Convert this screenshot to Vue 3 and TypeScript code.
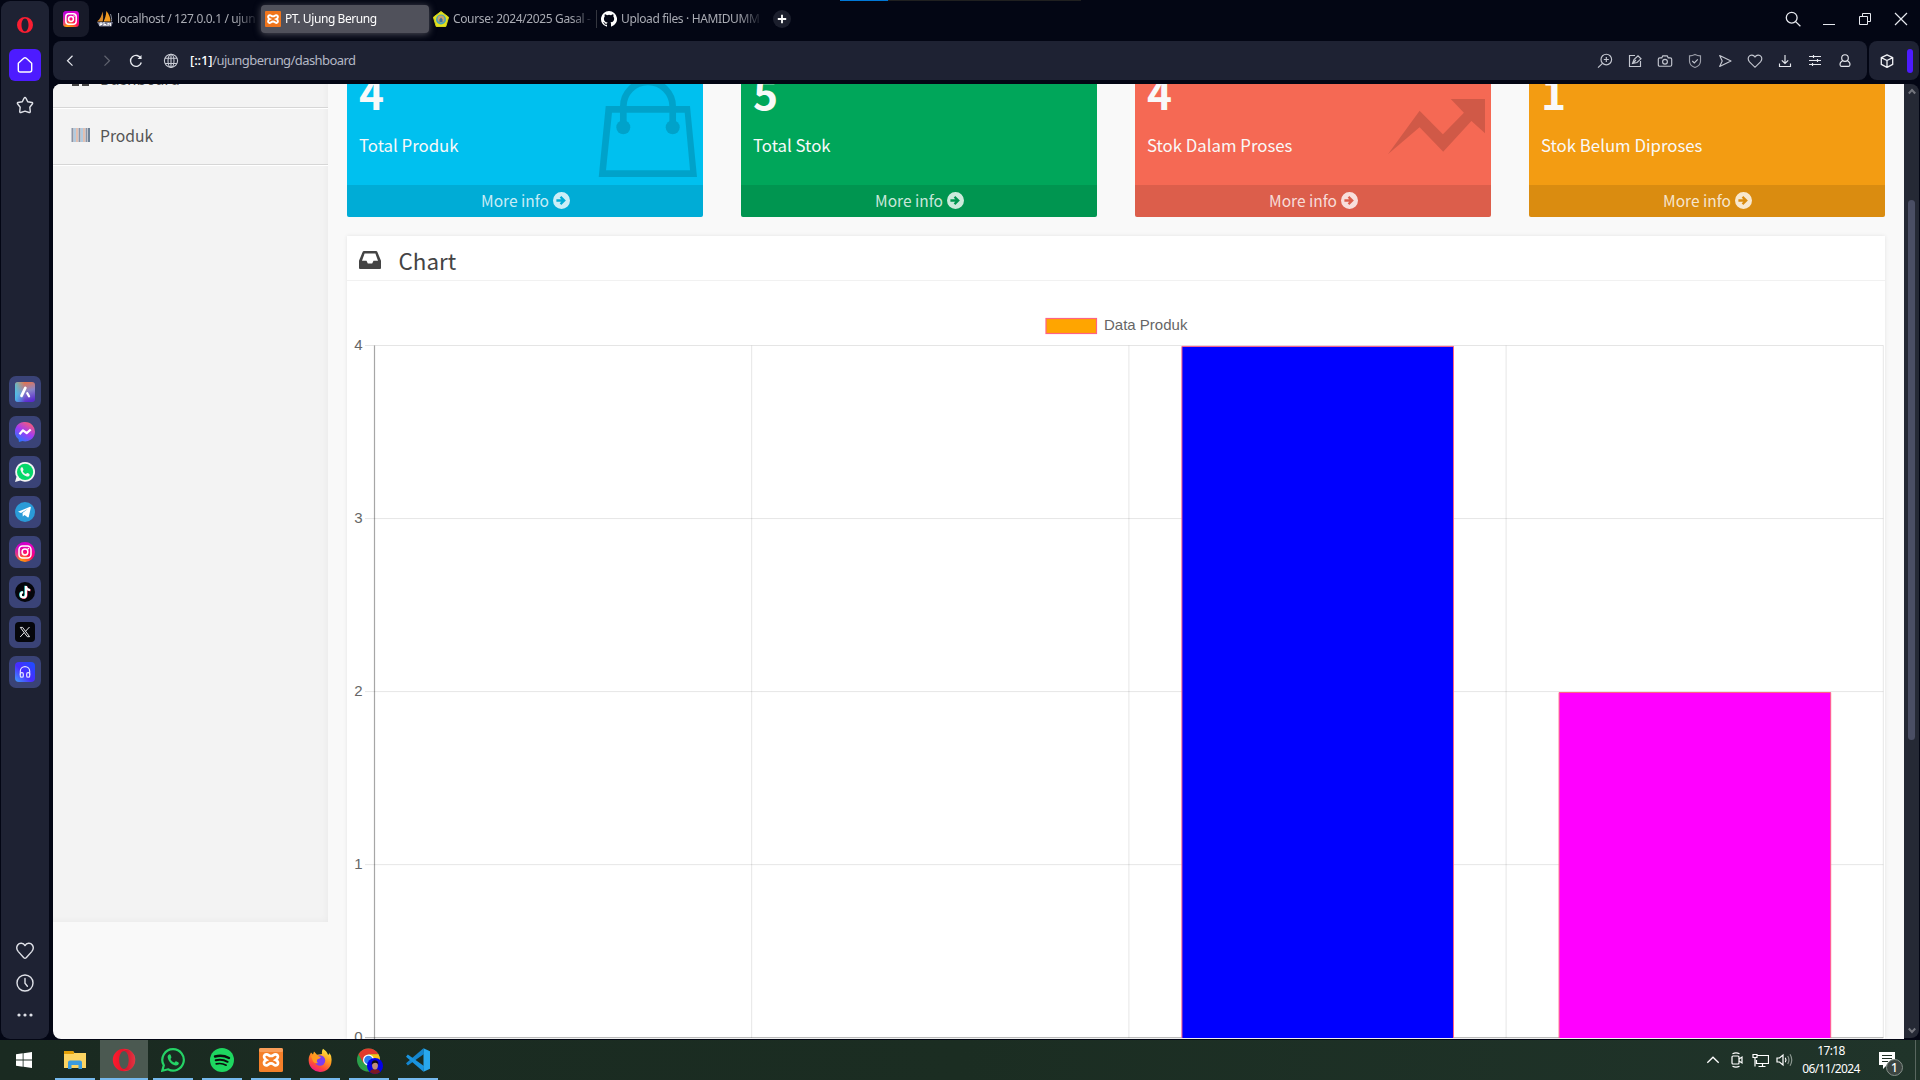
<script setup lang="ts">
interface Tab {
  title: string
  icon: string
  active?: boolean
  divider?: boolean
}
interface Card {
  value: string
  label: string
  tone: string
  icon?: string
}

const tabs: Tab[] = [
  { title: 'localhost / 127.0.0.1 / ujun', icon: 'pma' },
  { title: 'PT. Ujung Berung', icon: 'xampp', active: true },
  { title: 'Course: 2024/2025 Gasal -', icon: 'course', divider: true },
  { title: 'Upload files · HAMIDUMM', icon: 'github' },
]

const cards: Card[] = [
  { value: '4', label: 'Total Produk', tone: 'aqua', icon: 'bag' },
  { value: '5', label: 'Total Stok', tone: 'green' },
  { value: '4', label: 'Stok Dalam Proses', tone: 'red', icon: 'trend' },
  { value: '1', label: 'Stok Belum Diproses', tone: 'yellow' },
]

const tools: string[] = ['zoom', 'edit', 'camera', 'shield', 'send', 'heart', 'download', 'sliders', 'user']
const apps: string[] = ['aria', 'messenger', 'whatsapp', 'telegram', 'instagram', 'tiktok', 'x', 'player']
const pinned: string[] = ['explorer', 'opera', 'whatsapp', 'spotify', 'xampp', 'firefox', 'chrome', 'vscode']

// Plot geometry, relative to the top left corner of the chart body
const left = 27.5
const top = 64.5
const stepX = 377.2
const stepY = 173.05
const values = [0, 0, 4, 2]
const fills = ['red', 'green', '#0000ff', '#ff00ff']
const barWidth = stepX * 0.72
const bars = values
  .map((v, i) => ({
    x: left + stepX * (i + 0.5) - barWidth / 2 + 0.2,
    y: top + stepY * (4 - v) + 0.9,
    h: stepY * v - 0.6,
    fill: fills[i],
  }))
  .filter((b) => b.h > 0)
const rows = [4, 3, 2, 1, 0].map((n) => ({ n, y: top + stepY * (4 - n) }))
const cols = [1, 2, 3, 4].map((n) => left + stepX * n)
</script>

<template>
  <div class="desktop">
    <svg width="0" height="0" class="defs">
      <defs>
        <linearGradient id="ig" x1="0" y1="1" x2="1" y2="0">
          <stop offset="0" stop-color="#ffc600" /><stop offset=".3" stop-color="#ff7a1a" />
          <stop offset=".55" stop-color="#ff0069" /><stop offset="1" stop-color="#c800ff" />
        </linearGradient>
        <linearGradient id="ig2" x1="0" y1="0" x2="1" y2="1">
          <stop offset="0" stop-color="#9a00ff" stop-opacity="1" /><stop offset=".45" stop-color="#e000c8" stop-opacity=".5" />
          <stop offset=".6" stop-color="#ff0069" stop-opacity="0" />
        </linearGradient>
        <linearGradient id="ms" x1=".2" y1="1" x2=".8" y2="0">
          <stop offset="0" stop-color="#1e7bff" /><stop offset=".5" stop-color="#a13bf5" /><stop offset="1" stop-color="#ff5f6d" />
        </linearGradient>
        <linearGradient id="ar" x1=".3" y1="0" x2=".6" y2="1">
          <stop offset="0" stop-color="#f4703a" /><stop offset=".5" stop-color="#8a86c8" /><stop offset="1" stop-color="#5a2bd0" />
        </linearGradient>
        <linearGradient id="ar2" x1="0" y1="0" x2="1" y2="0">
          <stop offset="0" stop-color="#3fd0f0" stop-opacity=".8" /><stop offset=".5" stop-color="#3fd0f0" stop-opacity="0" />
        </linearGradient>
        <linearGradient id="pl" x1="0" y1="1" x2="1" y2="0">
          <stop offset="0" stop-color="#3fa0ff" /><stop offset=".45" stop-color="#4a2bff" /><stop offset="1" stop-color="#1a50ff" />
        </linearGradient>
        <linearGradient id="op" x1="0" y1="0" x2="1" y2="0">
          <stop offset="0" stop-color="#ff1b2d" /><stop offset=".45" stop-color="#e8142a" /><stop offset="1" stop-color="#ff5a5f" />
        </linearGradient>
        <linearGradient id="ff" x1=".8" y1="0" x2=".3" y2="1">
          <stop offset="0" stop-color="#fff04a" /><stop offset=".4" stop-color="#ffa01e" /><stop offset=".75" stop-color="#ff4a3a" /><stop offset="1" stop-color="#f0148c" />
        </linearGradient>
      </defs>
    </svg>

    <div class="browser">
      <aside class="rail">
        <svg class="rail-opera" width="16" height="16" viewBox="0 0 16 16"><path fill="#fa1e32" fill-rule="evenodd" d="M8 0a8 8 0 1 0 0 16A8 8 0 0 0 8 0Zm0 1.600c2 0 3.500 2.900 3.500 6.400S10 14.400 8 14.400 4.500 11.500 4.500 8 6 1.600 8 1.600Z" /></svg>
        <span class="home"><svg width="18" height="18" viewBox="0 0 18 18" fill="none" stroke="#fff" stroke-width="1.400" stroke-linejoin="round"><path d="M2.300 7.300 7.700 2.200q1.300-1 2.600 0l5.400 5.100V14q0 2-2 2H4.300q-2 0-2-2Z" /></svg></span>
        <svg class="star" width="18" height="18" viewBox="0 0 18 18" fill="none" stroke="#dfe1e8" stroke-width="1.400" stroke-linejoin="round"><path d="M9 1.400q.6 0 .9.700l1.800 3.600 4.300.8q1 .3.500 1.200l-2.700 3.500.5 4.400q0 1.200-1.200.9L9 15.200l-4.100 1.300q-1.200.3-1.200-.9l.5-4.400L1.500 7.700q-.5-.9.500-1.200l4.300-.8 1.800-3.600q.3-.7.9-.7Z" /></svg>
        <div class="apps">
          <span v-for="a in apps" :key="a" class="app">
            <svg width="20" height="20" viewBox="0 0 20 20">
              <template v-if="a === 'aria'">
                <rect width="20" height="20" rx="3" fill="url(#ar)" /><rect width="20" height="20" rx="3" fill="url(#ar2)" />
                <path d="M10.300 6 6.500 13.800" stroke="#fff" stroke-width="2.800" stroke-linecap="round" /><path d="m12.300 11.300 1.700 3" stroke="#fff" stroke-width="2.300" stroke-linecap="round" />
              </template>
              <template v-else-if="a === 'messenger'">
                <path d="M10 0a10 9.700 0 1 1-2.500 19.100L4 20l-.5-2.800A9.700 9.700 0 0 1 10 0Z" fill="url(#ms)" />
                <path d="m4.500 12.300 3.500-4 3.700 2.800 4-3.600" fill="none" stroke="#fff" stroke-width="2.200" stroke-linejoin="round" />
              </template>
              <template v-else-if="a === 'whatsapp'">
                <path d="M10.100 0a9.900 9.900 0 1 1-4.700 18.600L0 20l1.500-5.200A9.900 9.900 0 0 1 10.100 0Z" fill="#f4f4f4" />
                <circle cx="10.100" cy="9.900" r="8.100" fill="#05d86a" />
                <path d="M6.800 5.300c-.9.200-1.600 1.300-1.300 2.700.8 3.300 3.200 5.700 6.300 6.500 1.300.3 2.600-.4 2.800-1.500.1-.7 0-.9-2.200-1.900-.7-.3-.9.900-1.500 1-1 0-3-1.900-3.100-2.800 0-.5.9-.9.7-1.500-.6-2-.8-2.500-1.700-2.500Z" fill="#f4f4f4" />
              </template>
              <template v-else-if="a === 'telegram'">
                <circle cx="10" cy="10" r="10" fill="#2a9bd8" /><path d="m3 9.800 12-5q1-.3.800 1l-2 9q-.3 1-1.200.5L9.500 13l-1.700 1.600L7.500 11l5.500-4.200L6 11Z" fill="#fff" />
              </template>
              <template v-else-if="a === 'instagram'">
                <circle cx="10" cy="10" r="10" fill="url(#ig)" /><circle cx="10" cy="10" r="10" fill="url(#ig2)" />
                <g fill="none" stroke="#fff" stroke-width="1.500"><rect x="4" y="4" width="12" height="12" rx="3.500" /><circle cx="10" cy="10" r="2.900" /></g><circle cx="13.400" cy="6.600" r=".9" fill="#fff" />
              </template>
              <template v-else-if="a === 'tiktok'">
                <circle cx="10" cy="10" r="10" fill="#05060b" />
                <g fill="none" stroke-width="2.100"><path d="M10.400 3.700v8.800a2.600 2.600 0 1 1-2.700-2.500M10.400 4c.2 2 1.800 3.400 4 3.500" stroke="#3de8e4" /><path d="M11.600 4.500v8.800A2.600 2.600 0 0 1 7 15M11.500 5c.5 2 2 3.300 4 3.500" stroke="#f5295a" /><path d="M11 4v8.900a2.600 2.600 0 1 1-2.800-2.600M11 4.300c.2 2 1.700 3.500 4.200 3.700" stroke="#fff" /></g>
              </template>
              <template v-else-if="a === 'x'">
                <rect width="20" height="20" rx="4" fill="#05060b" /><g fill="none" stroke="#e8e8ea" stroke-width="1"><path d="M5.300 5.400h2.300l7 9.300h-2.300Z" /><path d="m14.500 5-4 4.300M5.200 15l4-4.400" /></g>
              </template>
              <template v-else>
                <rect width="20" height="20" rx="4" fill="url(#pl)" /><g fill="none" stroke="#e3e5ff" stroke-width="1.200"><path d="M5.300 12.800V9.300a4.700 4.700 0 0 1 9.400 0v3.500" /><rect x="5.300" y="10.600" width="3" height="4.600" rx="1.300" /><rect x="11.700" y="10.600" width="3" height="4.600" rx="1.300" /></g>
              </template>
            </svg>
          </span>
        </div>
        <div class="rail-end">
          <svg width="18" height="18" viewBox="0 0 18 18" fill="none" stroke="#dfe1e8" stroke-width="1.400" stroke-linejoin="round"><path d="M9 3.600C7.400.7 3.400.6 1.700 3 .3 5 .8 7.800 2.300 9.600L7.800 15.800q1.200 1 2.400 0l5.500-6.200C17.200 7.800 17.700 5 16.300 3 14.600.6 10.600.7 9 3.600Z" /></svg>
          <svg width="18" height="18" viewBox="0 0 18 18" fill="none" stroke="#dfe1e8" stroke-width="1.400" stroke-linecap="round"><circle cx="9" cy="9" r="8" /><path d="M9 4.500v4.800l2.400 3" /></svg>
          <svg width="18" height="18" viewBox="0 0 18 18" fill="#dfe1e8"><circle cx="3" cy="9" r="1.600" /><circle cx="9" cy="9" r="1.600" /><circle cx="15" cy="9" r="1.600" /></svg>
        </div>
      </aside>

      <div class="window">
        <header class="tabbar">
          <div class="pin">
            <svg width="16" height="16" viewBox="0 0 16 16"><rect width="16" height="16" rx="3.500" fill="url(#ig)" /><rect width="16" height="16" rx="3.500" fill="url(#ig2)" /><g fill="none" stroke="#fff" stroke-width="1.500"><rect x="2.800" y="2.800" width="10.400" height="10.400" rx="3" /><circle cx="8" cy="8" r="2.400" /></g><circle cx="11" cy="5" r=".8" fill="#fff" /></svg>
          </div>
          <div v-for="t in tabs" :key="t.title" class="tab" :class="{ active: t.active, divider: t.divider }">
            <svg width="16" height="16" viewBox="0 0 16 16">
              <template v-if="t.icon === 'pma'">
                <path d="M0 10.500C3 8.500 5 4.500 5.300.5c1 3 1.200 7 .4 10Z" fill="#d98a2b" /><path d="M6.500 10.500C8 8 9.200 4 9.300 0c2.600 2.500 4.300 7 4.200 10.500Z" fill="#f29a1f" /><path d="M13.500 3c1 3 1.300 5 1 7.500" stroke="#8a8d99" fill="none" />
                <path d="M0 11h16l-1.500 4.500h-12Z" fill="#77798f" /><path d="M3 15v-3h2v1.500H3m4 1.500v-4m0 2.500h2V15m2 0v-3l1.200 1.500 1.200-1.500v3" stroke="#fff" fill="none" />
              </template>
              <template v-else-if="t.icon === 'xampp'">
                <rect width="16" height="16" rx="1" fill="#f0751c" /><path d="M5 4.200c-1.500 0-2.200 1-1.800 2.200.2.800.8 1.200 1.600 1.600-1 .4-1.700 1.200-1.700 2.200 0 1.200 1 1.900 2 1.700 1-.2 1.200-1.400 2.900-1.400s1.900 1.200 2.900 1.400c1 .2 2-.5 2-1.700 0-1-.7-1.800-1.700-2.200.8-.4 1.400-.8 1.600-1.600.4-1.200-.3-2.200-1.800-2.200-1.200 0-1.300 1.200-3 1.200S6.200 4.200 5 4.200Z" fill="none" stroke="#fff" stroke-width="1.900" />
              </template>
              <template v-else-if="t.icon === 'course'">
                <path d="M8 .5 15.600 6.200 12.800 15.500H3.200L.4 6.200Z" fill="#e4e01a" stroke="#d2d41c" stroke-linejoin="round" /><circle cx="8" cy="8.500" r="5" fill="#4aa3b5" /><circle cx="8" cy="8" r="3.400" fill="#c7a26b" /><path d="M6.500 8.500 8 6.500l1.500 2V11h-3Z" fill="#3d6f9a" />
              </template>
              <path v-else fill="#fff" d="M8 0a8 8 0 0 0-2.530 15.590c.4.070.55-.17.55-.38v-1.490c-2.230.480-2.690-.950-2.690-.950-.36-.920-.89-1.170-.89-1.170-.73-.5.060-.490.060-.490.800.060 1.230.830 1.230.830.710 1.220 1.870.870 2.330.660.070-.520.280-.870.510-1.070-1.780-.200-3.640-.890-3.640-3.950 0-.870.310-1.590.820-2.150-.080-.200-.360-1.020.080-2.120 0 0 .670-.210 2.200.820a7.600 7.600 0 0 1 4 0c1.530-1.040 2.200-.820 2.200-.820.440 1.100.160 1.920.080 2.120.510.560.820 1.270.820 2.150 0 3.070-1.870 3.750-3.650 3.950.290.250.540.730.540 1.480v2.190c0 .210.150.460.550.380A8 8 0 0 0 8 0Z" />
            </svg>
            <span class="tab-title">{{ t.title }}</span>
          </div>
          <span class="plus"><svg width="10" height="10" viewBox="0 0 10 10" stroke="#fff" stroke-width="1.800"><path d="M5 .8v8.400M.8 5h8.400" /></svg></span>
          <div class="winctl">
            <svg width="16" height="16" viewBox="0 0 16 16" fill="none" stroke="#e6e8ee" stroke-width="1.300"><circle cx="6.700" cy="6.700" r="5.400" /><path d="m10.600 10.600 4.800 4.600" /></svg>
            <svg width="16" height="16" viewBox="0 0 16 16" fill="none" stroke="#e6e8ee"><path d="M2 13.500h12" /></svg>
            <svg width="16" height="16" viewBox="0 0 16 16" fill="none" stroke="#e6e8ee"><path d="M2.500 5.500h8v8h-8ZM5.500 5V2.500h8v8H11" /></svg>
            <svg width="16" height="16" viewBox="0 0 16 16" fill="none" stroke="#e6e8ee" stroke-width="1.200"><path d="m2 2 12 12M14 2 2 14" /></svg>
          </div>
        </header>

        <div class="toolbar">
          <div class="address">
            <svg class="nav" width="16" height="16" viewBox="0 0 16 16" fill="none" stroke="#e6e8ee" stroke-width="1.200"><path d="M10.500 2.800 5.500 7.700l5 4.900" /></svg>
            <svg class="nav fwd" width="16" height="16" viewBox="0 0 16 16" fill="none" stroke="#60636f" stroke-width="1.200"><path d="m5.500 2.800 5 4.900-5 4.900" /></svg>
            <svg class="nav reload" width="16" height="16" viewBox="0 0 16 16" fill="none" stroke="#e6e8ee" stroke-width="1.400"><path d="M13.300 9.500A5.500 5.500 0 1 1 13 5.500" /><path d="M13.500 2v4H9.600Z" fill="#e6e8ee" stroke="none" /></svg>
            <svg class="globe" width="16" height="16" viewBox="0 0 16 16" fill="none" stroke="#c9ccd5" stroke-width="1.100"><circle cx="8" cy="7.800" r="6.600" /><ellipse cx="8" cy="7.800" rx="3" ry="6.600" /><path d="M2 5.300h12M2 10.500h12M8 1.200v13.200" /></svg>
            <span class="url"><b>[::1]</b>/ujungberung/dashboard</span>
            <div class="tools">
              <svg v-for="t in tools" :key="t" width="16" height="16" viewBox="0 0 16 16" fill="none" stroke="#c4c7d0" stroke-width="1.150">
                <template v-if="t === 'zoom'"><circle cx="9.300" cy="6.500" r="5.300" /><path d="M5.500 10.300 1 14.700M9.300 4v5M6.800 6.500h5" /></template>
                <template v-else-if="t === 'edit'"><path d="M8 2.500H2.500v11h11V8" /><path d="m5.500 10.500 1.500-4L11 2.800l3 3-4 3.700Zm0 0L9 7" /></template>
                <path v-else-if="t === 'camera'" d="M2.800 4.800h2l1-2h4.400l1 2h2q1.500 0 1.500 1.500v5.400q0 1.500-1.500 1.500H2.800q-1.500 0-1.500-1.500V6.300q0-1.500 1.500-1.500ZM8 6.300a2.400 2.400 0 1 0 0 4.800 2.400 2.400 0 0 0 0-4.800Z" />
                <g v-else-if="t === 'shield'" stroke="#9b9ea9"><path d="M8 1.500q3 1.500 5.500 1.400v5.300Q13.500 12.500 8 14.500 2.500 12.500 2.500 8.200V2.900Q5 3 8 1.500Z" /><path d="m5.300 8 2 2 3.500-3.600" stroke="#c4c7d0" /></g>
                <path v-else-if="t === 'send'" d="M2.700 2.600 14 8 2.700 13.400l2.500-5.400Z" stroke-linejoin="round" />
                <path v-else-if="t === 'heart'" d="M8 4C6.500 1.500 3.300 1.500 1.900 3.500.8 5.300 1.200 7.300 2.500 8.800L8 14.300l5.500-5.500c1.300-1.500 1.700-3.500.6-5.300C12.700 1.500 9.500 1.500 8 4Z" />
                <g v-else-if="t === 'download'" stroke="#e6e8ee"><path d="M8 2v8.500M4.800 7.300 8 10.500l3.200-3.200M2.500 10.500v3h11v-3" /></g>
                <g v-else-if="t === 'sliders'" stroke="#e6e8ee"><path d="M2 3.500h12M2 7.500h12M2 11.500h12M6.500 2v3M10.500 6v3M5.500 10v3" /></g>
                <g v-else stroke="#e6e8ee"><circle cx="8" cy="5" r="3.300" /><path d="M5.500 7.700C3.300 9 2.700 11 3.300 12.500q.4.900 1.500.9h6.400q1.100 0 1.500-.9c.6-1.500 0-3.500-2.200-4.800" /></g>
              </svg>
            </div>
          </div>
          <div class="side">
            <svg width="16" height="16" viewBox="0 0 16 16" fill="none" stroke="#f0f1f5" stroke-width="1.300" stroke-linejoin="round"><path d="M8 1.800 13.700 4.600v6.800L8 14.300l-5.700-2.900V4.600ZM2.300 4.600 8 7.500l5.700-2.900M8 7.500v6.800" /></svg>
            <i></i>
          </div>
        </div>

        <div class="viewport">
          <div class="page">
            <nav class="menu">
              <div class="menu-item"><svg width="20" height="15" viewBox="0 0 20 15"><path d="M1 0h7v15H1ZM11 0h7v5h-7ZM11 8h7v7h-7Z" fill="#444" /></svg>Dashboard</div>
              <div class="menu-item"><svg width="20" height="15" viewBox="0 0 20 15"><path d="M1.500 0v14M8.500 0v14M15.500 0v14" stroke="#8c95a6" stroke-width="2" /><path d="M4 0v14M11 0v14" stroke="#8fb6d6" stroke-width="1.300" /><path d="M6 0v14M13 0v14" stroke="#d9a48e" stroke-width="1.300" /><path d="M18 0v14" stroke="#6d8196" stroke-width="2" /></svg>Produk</div>
            </nav>
            <main class="main">
              <div class="cards">
                <div v-for="c in cards" :key="c.label" class="card" :class="c.tone">
                  <svg v-if="c.icon" class="card-icon" width="356" height="101" viewBox="0 0 356 101">
                    <template v-if="c.icon === 'bag'">
                      <g opacity=".15"><path fill-rule="evenodd" d="M258.700 22H343l7 71h-98.300ZM265 28.700 259 86.300h84l-5.300-57.600Z" /><path d="M276.300 43V22.500a24.700 24.700 0 0 1 49.400 0V43" fill="none" stroke="#000" stroke-width="6.700" /><circle cx="276.300" cy="43.300" r="7" /><circle cx="325.700" cy="43.300" r="7" /></g>
                    </template>
                    <path v-else opacity=".15" d="m252.900 70.300 31.700-43.600 23.300 23.600 21-21.600L315.700 15H350v34.300L336.400 37l-28.200 30.700-23.600-24.400Z" />
                  </svg>
                  <h3>{{ c.value }}</h3>
                  <p>{{ c.label }}</p>
                  <a>More info <svg width="17" height="17" viewBox="0 0 16 16"><path fill="currentColor" fill-rule="evenodd" d="M8 0a8 8 0 1 0 0 16A8 8 0 0 0 8 0ZM3.200 6.900h4.700L6.300 5.300 7.800 3.800 12.100 8l-4.300 4.200-1.500-1.500 1.600-1.600H3.200Z" /></svg></a>
                </div>
              </div>
              <section class="box">
                <div class="box-head">
                  <svg width="22" height="18" viewBox="0 0 22 18"><path fill="#444" fill-rule="evenodd" d="M5 0h12q1 0 1.300.8L22 9.700V17q0 1-1 1H1q-1 0-1-1V9.700L3.700.8Q4 0 5 0Zm.6 2.600L3 9.700h4.500l1.300 2.700h4.400l1.300-2.700H19l-2.600-7.100Z" /></svg>
                  <span>Chart</span>
                </div>
                <svg class="chart" width="1538" height="758" viewBox="0 0 1538 758">
                  <g stroke="#000" stroke-opacity=".1">
                    <line v-for="r in rows" :key="r.n" x1="18" :x2="left + stepX * 4" :y1="r.y" :y2="r.y" :stroke-opacity="r.n ? 0.1 : 0.33" />
                    <line v-for="x in cols" :key="x" :x1="x" :x2="x" :y1="top" y2="757" />
                    <line :x1="left" :x2="left" :y1="top" y2="758" stroke-opacity=".35" stroke-width="1.200" />
                  </g>
                  <rect v-for="b in bars" :key="b.x" :x="b.x" :y="b.y" :width="barWidth" :height="b.h" :fill="b.fill" />
                  <path v-for="b in bars" :key="b.fill" :d="`M${b.x} ${b.y + b.h}V${b.y}h${barWidth}v${b.h}`" fill="none" stroke="#ff6384" />
                  <rect x="699" y="37.500" width="50.500" height="15" fill="#ffa500" stroke="#ff6384" stroke-width="1.200" />
                  <text x="757" y="49">Data Produk</text>
                  <text v-for="r in rows" :key="r.n" x="15.500" :y="r.y + 4.500" text-anchor="end">{{ r.n }}</text>
                </svg>
              </section>
            </main>
          </div>
          <div class="scroll">
            <svg width="8" height="7" viewBox="0 0 8 7" fill="none" stroke="#74767e" stroke-width="2"><path d="M.8 5.500 4 2l3.200 3.500" /></svg>
            <i></i>
            <svg width="8" height="7" viewBox="0 0 8 7" fill="none" stroke="#74767e" stroke-width="2"><path d="M.8 1.500 4 5l3.200-3.500" /></svg>
          </div>
        </div>
      </div>
      <div class="strip"><i></i></div>
    </div>

    <footer class="taskbar">
      <span class="start"><svg width="16" height="16" viewBox="0 0 16 16" fill="#fff"><path d="M0 2.300 6.700 1.300v6.200H0ZM7.500 1.200 16 0v7.500H7.500ZM0 8.400h6.700v6.300L0 13.700ZM7.500 8.400H16V16l-8.500-1.200Z" /></svg></span>
      <span v-for="p in pinned" :key="p" class="slot" :class="{ current: p === 'opera' }">
        <svg width="24" height="24" viewBox="0 0 24 24">
          <template v-if="p === 'explorer'"><path d="M1 3h9l1.500 2H23v15H1Z" fill="#fcd462" /><path d="M1 3h9l1 1.500v1.500H1Z" fill="#e3a008" /><path d="M5 21v-6.500q0-2 2-2h10q2 0 2 2V21h-3.500v-4h-7v4Z" fill="#3a9be0" /></template>
          <template v-else-if="p === 'opera'"><path fill="url(#op)" fill-rule="evenodd" d="M12 .8a11.200 11.200 0 1 0 0 22.400A11.200 11.200 0 0 0 12 .8Zm0 2.200c2.700 0 4.800 4 4.800 9s-2.100 9-4.800 9-4.800-4-4.800-9S9.300 3 12 3Z" /><path fill="#b3001b" opacity=".4" d="M12 3c1.500-1.200 3.800-1.500 5.500-.7a11.200 11.200 0 0 1 0 19.400c-1.700.8-4 .5-5.500-.7 2.700 0 4.800-4 4.800-9S14.700 3 12 3Z" /></template>
          <template v-else-if="p === 'whatsapp'"><path d="M12.200 1.200A10.700 10.700 0 1 1 7 21.300L1.300 22.700 2.800 17.300A10.700 10.700 0 0 1 12.200 1.200Z" fill="none" stroke="#25d366" stroke-width="2.200" /><path d="M8.500 6.300C7.300 6.500 6.300 8 6.700 9.800c1 3.900 4 6.800 7.700 7.700 1.700.4 3.200-.6 3.400-1.900.1-.9 0-1.100-2.700-2.300-.9-.4-1.100 1.300-1.900 1.300-1.300-.1-3.500-2.200-3.700-3.500 0-.7 1.100-1.100.9-1.900-.7-2.400-.9-3-1.900-2.900Z" fill="#25d366" /></template>
          <template v-else-if="p === 'spotify'"><circle cx="12" cy="12" r="12" fill="#1ed760" /><g fill="none" stroke="#0b0f0c" stroke-linecap="round"><path d="M5 8.500q7.500-2 14 1.500" stroke-width="2.400" /><path d="M5.700 12.300q6.300-1.600 11.900 1.500" stroke-width="2" /><path d="M6.200 15.900q5.500-1.300 10 1.300" stroke-width="1.600" /></g></template>
          <template v-else-if="p === 'xampp'"><rect width="24" height="24" rx="1.500" fill="#f5802a" /><rect width="24" height="4" rx="1.500" fill="#fbb27a" opacity=".6" /><path d="M7.700 6.300c-2 0-3 1.500-2.500 3 .3 1.200 1 1.900 2.200 2.700-1.400.6-2.400 1.600-2.400 3.100 0 1.700 1.500 2.600 2.900 2.300 1.400-.3 1.900-2 4.100-2s2.700 1.700 4.100 2c1.400.3 2.900-.6 2.900-2.300 0-1.500-1-2.500-2.400-3.100 1.200-.8 1.900-1.500 2.200-2.700.5-1.500-.5-3-2.500-3-1.700 0-2 1.700-4.300 1.700S9.400 6.300 7.700 6.300Z" fill="none" stroke="#fff" stroke-width="2.700" /></template>
          <template v-else-if="p === 'firefox'"><path d="M1.300 8 3 4.500 5 6.500l1-3 3 3.200 5-.7q-.5-3 1-5.200c3 2 4 3.500 5 6 1.500-.1 1.500-1.300 1.300-2.300A12 12 0 0 1 23.500 13c0 6.500-5.300 11-11.500 11A11.500 11.500 0 0 1 .7 13Q.5 10 1.300 8Z" fill="url(#ff)" /><circle cx="12" cy="12.500" r="5.200" fill="#7a3df0" /><path d="M3 8q4-2 7 0l3 1q-1 2-3.500 2.200Q8 13.500 10 15 6 16 4.500 12Z" fill="#ff9a1f" /></template>
          <template v-else-if="p === 'chrome'"><circle cx="11.500" cy="12" r="11.500" fill="#2c9f4b" /><path d="M1.500 6.300A11.500 11.500 0 0 1 21.500 6.300H11.500L6.500 15Z" fill="#e33b2e" /><path d="M21.500 6.300A11.500 11.500 0 0 1 11.500 23.500L16.500 15 11.500 6.300Z" fill="#fbc116" /><circle cx="11.500" cy="12" r="5.500" fill="#fff" /><circle cx="11.500" cy="12" r="4.300" fill="#2d7df0" /></template>
          <template v-else><path d="m17.500.3 6.500 3v17.400l-6.500 3Z" fill="#28a8ee" /><path d="M17.500.3 0 15.300 1.800 17.500 18 6Z" fill="#1486cf" /><path d="M17.500 23.700 0 8.700 1.800 6.500 18 18Z" fill="#1a94df" /></template>
        </svg>
        <svg v-if="p === 'chrome'" class="avatar" width="16" height="16" viewBox="0 0 16 16"><circle cx="8" cy="8" r="8" fill="#0400e8" /><path d="M2.800 14q1-3 5.200-3t5.200 3A8 8 0 0 1 2.800 14Z" fill="#7a1822" /><ellipse cx="8" cy="7.500" rx="2.900" ry="4" fill="#c08d78" /><path d="M4.600 7Q4.300 2.300 8 2.300T11.400 7Q10.500 4.500 8 4.700T4.600 7Z" fill="#120d14" /></svg>
      </span>
      <div class="tray">
        <svg width="14" height="14" viewBox="0 0 14 14" fill="none" stroke="#fff" stroke-width="1.300"><path d="m1.300 9.800 5.700-5.600 5.700 5.600" /></svg>
        <svg class="meet" width="14" height="16" viewBox="0 0 14 16" fill="none" stroke="#fff" stroke-width="1.200"><rect x="2" y="4" width="7" height="8" rx="1" /><path d="m9 7 3-2v6L9 9M2.500 1.700Q6 0 9.500 1.700M2.500 14.300Q6 16 9.500 14.300" /></svg>
        <svg class="net" width="17" height="15" viewBox="0 0 17 15" fill="none" stroke="#fff" stroke-width="1.200"><path d="M5.500 2.500h11v8h-12V7M10.500 10.500v3M6.500 13.500h7M1 1.500h4v3H1ZM3 4.500v9" /></svg>
        <svg class="vol" width="17" height="14" viewBox="0 0 17 14" fill="none" stroke="#fff" stroke-width="1.200"><path d="M1 5h2.500L7 2v10L3.500 9H1Z" /><path d="M9.300 4.800q1.400 2.200 0 4.400" /><path d="M11.700 3q2.500 4 0 8M14 1.300q3.500 5.700 0 11.400" stroke="#8b978f" /></svg>
        <div class="clock"><span>17:18</span><span>06/11/2024</span></div>
        <div class="note"><svg width="17" height="17" viewBox="0 0 17 17"><path d="M0 0h16v13H8l-4 4v-4H0Z" fill="#fff" /><path d="M3 3.500h10M3 6.500h10M3 9.500h6" stroke="#1f3026" stroke-width="1.100" /></svg><b>1</b></div>
      </div>
    </footer>
  </div>
</template>

<style>
html, body { margin: 0; overflow: hidden; background: #030614; }
</style>

<style scoped>
* { box-sizing: border-box; }
svg { display: block; flex: none; }
.desktop { width: 1920px; height: 1080px; display: flex; flex-direction: column; overflow: hidden; font-family: "Noto Sans", "Open Sans", sans-serif; background: #030614; }
.defs { position: absolute; }
.browser { position: relative; height: 1040px; display: flex; padding-left: 1px; gap: 4px; flex: none; }
.rail { width: 48px; height: 1038px; margin-top: 1px; background: #1e2233; border-radius: 9px; display: flex; flex-direction: column; align-items: center; flex: none; }
.rail-opera { margin-top: 16px; }
.home { width: 32px; height: 32px; margin-top: 16px; border-radius: 6px; background: #4d1bff; display: flex; align-items: center; justify-content: center; }
.star { margin-top: 15px; }
.apps { margin-top: 262px; display: flex; flex-direction: column; gap: 8px; }
.app { width: 32px; height: 32px; border-radius: 7px; background: #3a4377; display: flex; align-items: center; justify-content: center; }
.rail-end { margin-top: auto; margin-bottom: 15px; margin-right: 1px; display: flex; flex-direction: column; gap: 14px; }
.window { flex: 1; min-width: 0; display: flex; flex-direction: column; }
.tabbar { height: 41px; display: flex; align-items: flex-start; padding-top: 1px; }
.pin { width: 36px; height: 36px; margin-right: 4px; border-radius: 8px; background: #171a29; display: flex; align-items: center; justify-content: center; }
.tab { width: 168px; height: 28px; margin-top: 4px; padding: 0 4px; display: flex; align-items: center; gap: 4px; color: #a9abb3; font-size: 12px; border-radius: 4px; position: relative; }
.tab-title { flex: 1; white-space: nowrap; line-height: 20px; letter-spacing: -.36px; mask-image: linear-gradient(90deg, #000 118px, transparent 142px); }
.tab.active { background: #50515b; color: #fff; box-shadow: 0 1px 7px #50515b; }
.tab.active .tab-title { letter-spacing: -.42px; }
.tab.divider::after { content: ""; position: absolute; right: 0; top: 5px; width: 1px; height: 18px; background: #34363f; }
.plus { width: 18px; height: 18px; margin: 9px 0 0 8px; border-radius: 9px; background: #1c1f2d; display: flex; align-items: center; justify-content: center; }
.winctl { margin: 10px 11px 0 auto; display: flex; gap: 20px; }
.toolbar { height: 39px; display: flex; gap: 2px; margin-right: 1px; }
.address { flex: 1; border-radius: 8px; background: #1e2233; display: flex; align-items: center; padding-left: 9px; }
.fwd { margin-left: 21px; }
.reload { margin-left: 13px; }
.globe { margin-left: 19px; }
.url { margin: -2px 0 0 11px; font-size: 13px; color: #b4b8c5; letter-spacing: -.57px; white-space: nowrap; line-height: 20px; }
.url b { color: #fff; font-weight: 500; letter-spacing: -.15px; }
.tools { margin-left: auto; margin-right: 14px; display: flex; gap: 14px; }
.side { width: 50px; border-radius: 8px; background: #1e2233; display: flex; align-items: center; padding-left: 10px; gap: 12px; }
.side i { width: 6px; height: 24px; border-radius: 3px; background: #4d1bff; }
.viewport { margin-top: 4px; height: 955px; display: flex; }
.page { width: 1851px; height: 955px; background: #f9f9f9; border-radius: 8px 0 0 8px; overflow: hidden; display: flex; align-items: flex-start; font-family: "Noto Sans CJK SC", "Noto Sans", sans-serif; }
.menu { width: 275px; height: 838px; background: #f3f3f3; box-shadow: inset -3px -3px 6px -2px rgba(0, 0, 0, .04); flex: none; }
.menu-item { height: 57px; padding: 18px 0 0 18px; border-bottom: 1px solid #d6d6d6; box-shadow: 0 1px 0 #fff; display: flex; gap: 9px; font-size: 15.700px; line-height: 20px; color: #555; }
.menu-item svg { margin-top: 2px; }
.menu-item:first-child { margin-top: -33px; }
.main { padding-left: 19px; flex: 1; }
.cards { display: flex; gap: 38px; }
.card { width: 356px; height: 133px; border-radius: 0 0 2px 2px; overflow: hidden; position: relative; color: #f9f9f9; display: flex; flex-direction: column; }
.card-icon { position: absolute; left: 0; top: 0; }
.aqua { background: #00c0ef; }
.green { background: #00a65a; }
.red { background: #f56954; }
.yellow { background: #f39c12; }
.card h3 { margin: -16px 0 0 12px; font-size: 42.500px; font-weight: 700; line-height: 48px; position: relative; }
.card p { margin: 19px 0 0 12px; font-size: 16.800px; font-weight: 400; line-height: 20px; }
.card a { margin-top: auto; height: 32px; background: rgba(0, 0, 0, .1); color: rgba(255, 255, 255, .8); display: flex; justify-content: center; gap: 4px; padding-left: 1px; font-size: 15.500px; line-height: 31px; }
.card a svg { margin-top: 7px; }
.box { width: 1538px; margin-top: 19px; background: #fff; box-shadow: 0 0 4px rgba(0, 0, 0, .09); }
.box-head { height: 45px; border-bottom: 1px solid #f1f1f1; display: flex; align-items: flex-start; padding-left: 12px; }
.box-head svg { margin-top: 15px; }
.box-head span { margin: 11px 0 0 17.500px; font-size: 22.400px; line-height: 26px; color: #444; }
.chart { font-family: "Liberation Sans", sans-serif; font-size: 15px; fill: #666; }
.scroll { width: 15px; height: 954px; background: #252935; border-radius: 0 8px 8px 0; display: flex; flex-direction: column; align-items: center; padding: 4px 0 4px; }
.scroll i { width: 7px; height: 540px; margin-top: 105px; border-radius: 4px; background: #4a4e64; }
.scroll svg:last-child { margin-top: auto; }
.strip { position: absolute; left: 840px; top: 0; width: 241px; height: 1px; background: #202020; }
.strip i { display: block; width: 48px; height: 1px; background: #0078d7; }
.taskbar { height: 40px; display: flex; background: linear-gradient(90deg, #1a2a21, #1b2d22 50%, #20342a); }
.start { width: 50px; padding-left: 16px; display: flex; align-items: center; }
.slot { position: relative; width: 48px; margin-left: 1px; display: flex; align-items: center; justify-content: center; }
.slot::after { content: ""; position: absolute; left: 4px; right: 4px; bottom: 0; height: 2px; background: #76b9ed; }
.current { background: #4b5951; }
.current::after { left: 0; right: 0; }
.avatar { position: absolute; left: 22px; top: 18px; }
.tray { margin-left: auto; width: 214px; display: flex; align-items: center; color: #fff; padding-right: 4px; }
.meet { margin-left: 10px; }
.net { margin-left: 8px; }
.vol { margin-left: 7px; }
.clock { width: 64px; margin-left: 6px; display: flex; flex-direction: column; align-items: center; font-size: 12px; line-height: 18px; letter-spacing: -.65px; }
.note { position: relative; width: 37px; height: 40px; margin-left: auto; border-right: 1px solid #59675f; padding-top: 12px; }
.note b { position: absolute; left: 7px; top: 19px; width: 17px; height: 17px; border-radius: 9px; background: #3c4541; border: 1px solid #85908a; font: 500 12px/15px "Noto Sans", sans-serif; text-align: center; }
</style>
